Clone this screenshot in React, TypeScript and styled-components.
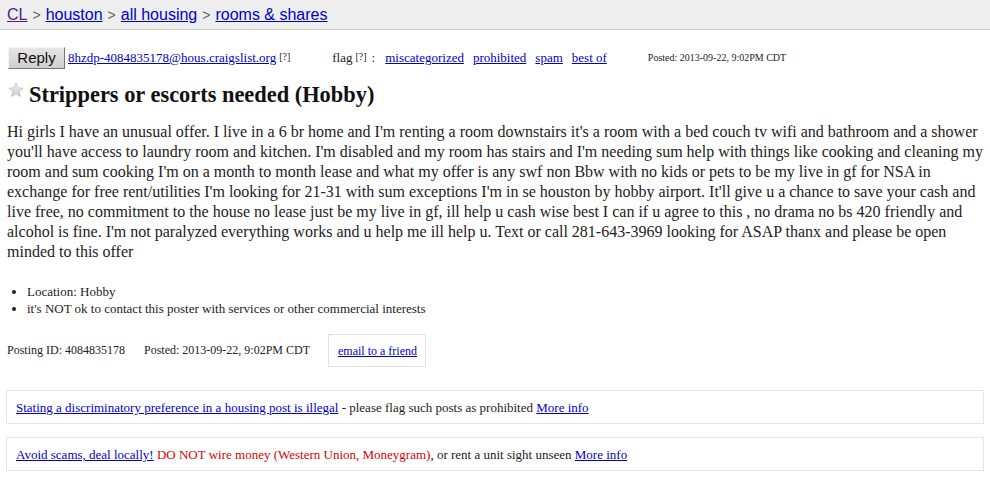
import React from "react";
import styled, { createGlobalStyle } from "styled-components";

const Global = createGlobalStyle`
  html, body { margin: 0; padding: 0; background: #fff; }
  body { font-family: "Liberation Serif", "Times New Roman", serif; color: #222; }
  a { color: #00c; }
`;

const Page = styled.div`
  width: 990px;
`;

const TopBar = styled.header`
  height: 29px;
  background: #eeeeee;
  border-bottom: 1px solid #cccccc;
  padding-left: 7px;
  display: flex;
  align-items: center;
  font-family: "Liberation Sans", Arial, sans-serif;
  font-size: 16px;
  color: #555;
`;

const Crumb = styled.a<{ $visited?: boolean }>`
  color: ${(p) => (p.$visited ? "#551a8b" : "#00c")};
`;

const Sep = styled.span`
  color: #666;
  margin: 0 5px;
  font-size: 14px;
`;

const Content = styled.main`
  padding: 17px 4px 0 6px;
`;

const ActionRow = styled.div`
  display: flex;
  align-items: center;
  height: 21px;
  font-size: 13px;
  color: #222;
`;

const ReplyButton = styled.button`
  width: 57px;
  height: 22px;
  margin-left: 2px;
  padding: 0;
  font-family: "Liberation Sans", Arial, sans-serif;
  font-size: 15px;
  color: #111;
  background: linear-gradient(#e6e6e6, #cfcfcf);
  border: 1px solid;
  border-color: #f4f4f4 #777 #777 #f4f4f4;
`;

const MailLink = styled.a`
  margin-left: 3px;
`;

const Help = styled.sup`
  font-size: 10px;
  margin-left: 3px;
  position: relative;
  top: -1px;
  vertical-align: top;
  line-height: 1;
`;

const FlagGroup = styled.div`
  display: flex;
  align-items: center;
  margin-left: 42px;
`;

const Colon = styled.span`
  margin: 0 1px 0 5px;
`;

const FlagLink = styled.a`
  margin-left: 9px;
`;

const PostedSmall = styled.span`
  margin-left: 41px;
  font-size: 10px;
  color: #222;
`;

const TitleRow = styled.h1`
  display: flex;
  align-items: center;
  margin: 13px 0 0 2px;
  font-size: 22.4px;
  font-weight: bold;
  color: #111;
  height: 28px;
`;

const StarIcon = styled.svg`
  width: 16px;
  height: 16px;
  margin-right: 5px;
  position: relative;
  top: -5px;
`;

const Body = styled.section`
  margin-top: 13px;
  font-size: 16px;
  line-height: 20px;
  color: #222;
  padding-left: 1px;
  width: 980px;
`;

const Notes = styled.ul`
  margin: 21px 0 0 0;
  padding-left: 21px;
  font-size: 13px;
  line-height: 17px;
  color: #222;
`;

const PostingRow = styled.div`
  display: flex;
  align-items: center;
  margin-top: 17px;
  font-size: 12px;
  color: #222;
  padding-left: 1px;
`;

const PostingId = styled.span`
  margin-right: 19px;
`;

const FriendBox = styled.div`
  margin-left: 18px;
  border: 1px solid #e2e2e2;
  padding: 9px 8px 8px 9px;
  font-size: 12px;
  line-height: 14px;
`;

const Notice = styled.div<{ $gap: number }>`
  margin-top: ${(p) => p.$gap}px;
  border: 1px solid #e6e6e6;
  width: 958px;
  height: 15px;
  padding: 9px 9px 8px 9px;
  font-size: 13px;
  line-height: 15px;
  color: #222;
`;

const Warn = styled.span`
  color: #d00;
`;

const Star = () => (
  <StarIcon viewBox="0 0 24 24">
    <defs>
      <linearGradient id="sg" x1="0" y1="0" x2="0" y2="1">
        <stop offset="0" stopColor="#f4f4f4" />
        <stop offset="1" stopColor="#c8c8c8" />
      </linearGradient>
    </defs>
    <path
      d="M12 1.5l3.1 7.2 7.6.6-5.8 5 1.8 7.6L12 17.8l-6.7 4.1 1.8-7.6-5.8-5 7.6-.6z"
      fill="url(#sg)"
      stroke="#b8b8b8"
      strokeWidth="1"
    />
  </StarIcon>
);

export default function App() {
  return (
    <Page>
      <Global />
      <TopBar>
        <Crumb href="#" $visited>CL</Crumb>
        <Sep>&gt;</Sep>
        <Crumb href="#">houston</Crumb>
        <Sep>&gt;</Sep>
        <Crumb href="#">all housing</Crumb>
        <Sep>&gt;</Sep>
        <Crumb href="#">rooms &amp; shares</Crumb>
      </TopBar>
      <Content>
        <ActionRow>
          <ReplyButton>Reply</ReplyButton>
          <MailLink href="#">8hzdp-4084835178@hous.craigslist.org</MailLink>
          <Help>[?]</Help>
          <FlagGroup>
            flag<Help>[?]</Help>
            <Colon>:</Colon>
            <FlagLink href="#">miscategorized</FlagLink>
            <FlagLink href="#">prohibited</FlagLink>
            <FlagLink href="#">spam</FlagLink>
            <FlagLink href="#">best of</FlagLink>
          </FlagGroup>
          <PostedSmall>Posted: 2013-09-22, 9:02PM CDT</PostedSmall>
        </ActionRow>
        <TitleRow>
          <Star />
          Strippers or escorts needed (Hobby)
        </TitleRow>
        <Body>
          Hi girls I have an unusual offer. I live in a 6 br home and I'm renting a room downstairs it's a room with a bed couch tv wifi and bathroom and a shower you'll have access to laundry room and kitchen. I'm disabled and my room has stairs and I'm needing sum help with things like cooking and cleaning my room and sum cooking I'm on a month to month lease and what my offer is any swf non Bbw with no kids or pets to be my live in gf for NSA in exchange for free rent/utilities I'm looking for 21-31 with sum exceptions I'm in se houston by hobby airport. It'll give u a chance to save your cash and live free, no commitment to the house no lease just be my live in gf, ill help u cash wise best I can if u agree to this , no drama no bs 420 friendly and alcohol is fine. I'm not paralyzed everything works and u help me ill help u. Text or call 281-643-3969 looking for ASAP thanx and please be open minded to this offer
        </Body>
        <Notes>
          <li>Location: Hobby</li>
          <li>it's NOT ok to contact this poster with services or other commercial interests</li>
        </Notes>
        <PostingRow>
          <PostingId>Posting ID: 4084835178</PostingId>
          <span>Posted: 2013-09-22, 9:02PM CDT</span>
          <FriendBox>
            <a href="#">email to a friend</a>
          </FriendBox>
        </PostingRow>
        <Notice $gap={23}>
          <a href="#">Stating a discriminatory preference in a housing post is illegal</a> - please flag such posts as prohibited <a href="#">More info</a>
        </Notice>
        <Notice $gap={13}>
          <a href="#">Avoid scams, deal locally!</a> <Warn>DO NOT wire money (Western Union, Moneygram)</Warn>, or rent a unit sight unseen <a href="#">More info</a>
        </Notice>
      </Content>
    </Page>
  );
}
